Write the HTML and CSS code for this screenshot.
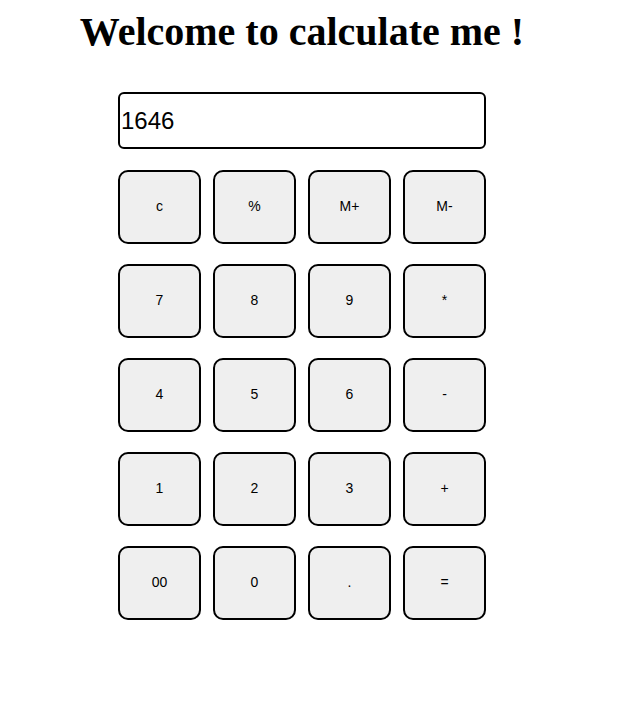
FILE: index.html
```html
<!DOCTYPE html>
<html>
<head>
<meta charset="utf-8">
<link rel="stylesheet" href="styles.css">
</head>
<body>
<div class="page">
  <h1 class="title">Welcome to calculate me !</h1>
  <div class="calc">
    <input class="display" type="text" value="1646">
    <div class="keys">
      <button class="key">c</button>
      <button class="key">%</button>
      <button class="key">M+</button>
      <button class="key">M-</button>
      <button class="key">7</button>
      <button class="key">8</button>
      <button class="key">9</button>
      <button class="key">*</button>
      <button class="key">4</button>
      <button class="key">5</button>
      <button class="key">6</button>
      <button class="key">-</button>
      <button class="key">1</button>
      <button class="key">2</button>
      <button class="key">3</button>
      <button class="key">+</button>
      <button class="key">00</button>
      <button class="key">0</button>
      <button class="key">.</button>
      <button class="key">=</button>
    </div>
  </div>
</div>
</body>
</html>
```
FILE: styles.css
```css
body {
  margin: 0;
  background: #fff;
}
.page {
  width: 588px;
  margin: 0 8px;
}
.title {
  font-family: "Liberation Serif", serif;
  font-weight: bold;
  font-size: 40px;
  text-align: center;
  margin: 10px 0 0 0;
  line-height: 44px;
}
.calc {
  width: 368px;
  margin: 38px auto 0;
  display: flex;
  flex-direction: column;
  gap: 21px;
}
.display {
  box-sizing: border-box;
  width: 368px;
  height: 57px;
  border: 2px solid #000;
  border-radius: 6px;
  padding: 0 1px;
  font-family: "Liberation Sans", Arial, sans-serif;
  font-size: 24px;
  color: #000;
  outline: none;
}
.keys {
  display: grid;
  grid-template-columns: repeat(4, 83px);
  grid-auto-rows: 74px;
  column-gap: 12px;
  row-gap: 20px;
}
.key {
  box-sizing: border-box;
  border: 2px solid #000;
  border-radius: 10px;
  background: #efefef;
  font-family: "Liberation Sans", Arial, sans-serif;
  font-size: 14px;
  color: #000;
  padding: 0 0 2px 0;
}
```
